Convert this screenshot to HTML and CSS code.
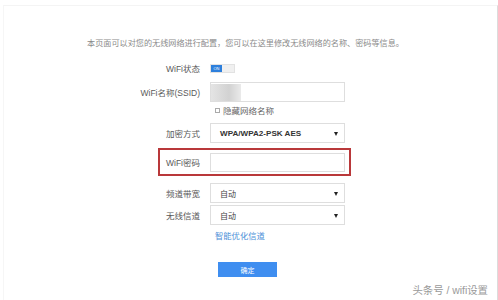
FILE: index.html
```html
<!DOCTYPE html>
<html lang="zh-CN">
<head>
    <meta charset="UTF-8">
    <title>无线设置</title>
    <link rel="stylesheet" href="styles.css">
</head>
<body>
    <div class="panel">
        <p class="intro">本页面可以对您的无线网络进行配置，您可以在这里修改无线网络的名称、密码等信息。</p>

        <div class="form">
            <div class="row row-toggle">
                <label>WiFi状态</label>
                <div class="toggle"><span class="toggle-on">ON</span><span class="toggle-off"></span></div>
            </div>

            <div class="row row-field">
                <label>WiFi名称(SSID)</label>
                <div class="field"><span class="blur"></span></div>
            </div>

            <div class="row row-check">
                <span class="checkbox"></span>
                <span>隐藏网络名称</span>
            </div>

            <div class="row row-field">
                <label>加密方式</label>
                <div class="field select strong">WPA/WPA2-PSK AES<span class="arrow"></span></div>
            </div>

            <div class="row row-field highlight">
                <label>WiFi密码</label>
                <div class="field"></div>
            </div>

            <div class="row row-field gap-top">
                <label>频道带宽</label>
                <div class="field select">自动<span class="arrow"></span></div>
            </div>

            <div class="row row-field">
                <label>无线信道</label>
                <div class="field select">自动<span class="arrow"></span></div>
            </div>

            <div class="row row-link">
                <a href="#">智能优化信道</a>
            </div>

            <div class="row row-submit">
                <button>确定</button>
            </div>
        </div>

        <div class="watermark">头条号 / wifi设置</div>
    </div>
</body>
</html>
```

FILE: styles.css
```css
body {
    margin: 0;
    background-color: #fff;
    font-family: "Liberation Sans", "Noto Sans CJK SC", sans-serif;
    color: #5a5a5a;
    font-size: 8.5px;
}

.panel {
    margin: 5px 0 0 3px;
    height: 295px;
    border-top: 1px solid #f4f4f4;
    border-left: 1px solid #f6f6f6;
    border-right: 1px solid #dcdcdc;
    box-sizing: border-box;
}

.intro {
    margin: 32px 0 0 83px;
    height: 12px;
    line-height: 12px;
    font-size: 8.15px;
    color: #8a8a8a;
    white-space: nowrap;
}

.form {
    margin-left: 96px;
}

.row {
    display: flex;
    align-items: center;
    gap: 10px;
}

.row label {
    width: 100px;
    flex: none;
    text-align: right;
    white-space: nowrap;
}

.row-toggle {
    height: 14px;
    margin-top: 11px;
}

.toggle {
    display: flex;
    width: 25px;
    height: 9px;
    border: 1px solid #e2e2e2;
    box-sizing: border-box;
}

.toggle-on {
    width: 11px;
    background-color: #2d7fdc;
    color: #fff;
    font-size: 4px;
    line-height: 7px;
    text-align: center;
}

.toggle-off {
    flex: 1;
    background-color: #f0f0f0;
}

.row-field {
    height: 20px;
    margin-top: 7px;
}

.row-field + .row-field {
    margin-top: 2px;
}

.field {
    position: relative;
    width: 135px;
    height: 20px;
    border: 1px solid #dedede;
    box-sizing: border-box;
    background-color: #fff;
    display: flex;
    align-items: center;
    padding-left: 9px;
    color: #444;
    font-size: 8px;
}

.blur {
    position: absolute;
    left: 0;
    top: 1px;
    width: 30px;
    height: 17px;
    background: linear-gradient(90deg, #e4e4e4, #d2d2d2 60%, #eaeaea);
}

.strong {
    font-weight: bold;
    color: #333;
    font-size: 8.1px;
}

.arrow {
    position: absolute;
    right: 6px;
    top: 8px;
    border-left: 2.5px solid transparent;
    border-right: 2.5px solid transparent;
    border-top: 4px solid #222;
}

.row-check {
    height: 12px;
    margin: 2px 0 0 115px;
    gap: 3px;
    color: #666;
}

.checkbox {
    width: 3px;
    height: 3px;
    border: 1px solid #aaa;
}

.row-field.highlight {
    height: 28px;
    margin: 5px 0 0 58px;
    padding-right: 2px;
    border: 2px solid #b9383a;
    box-sizing: border-box;
    width: 193px;
}

.highlight label {
    width: 40px;
}

.highlight .field {
    height: 19px;
}

.row-field.gap-top {
    margin-top: 7px;
}

.row-link {
    height: 12px;
    margin: 4px 0 0 115px;
}

.row-link a {
    color: #4d8fd8;
    text-decoration: none;
    font-size: 8.3px;
}

.row-submit {
    margin: 21px 0 0 118px;
}

button {
    width: 59px;
    height: 15px;
    border: none;
    background-color: #3f8ef0;
    color: #fff;
    font-family: "Noto Sans CJK SC", sans-serif;
    font-size: 7px;
    padding: 0;
}

.watermark {
    margin-top: 5px;
    padding-right: 9px;
    text-align: right;
    font-size: 10.4px;
    color: #9a9a9a;
}
```
